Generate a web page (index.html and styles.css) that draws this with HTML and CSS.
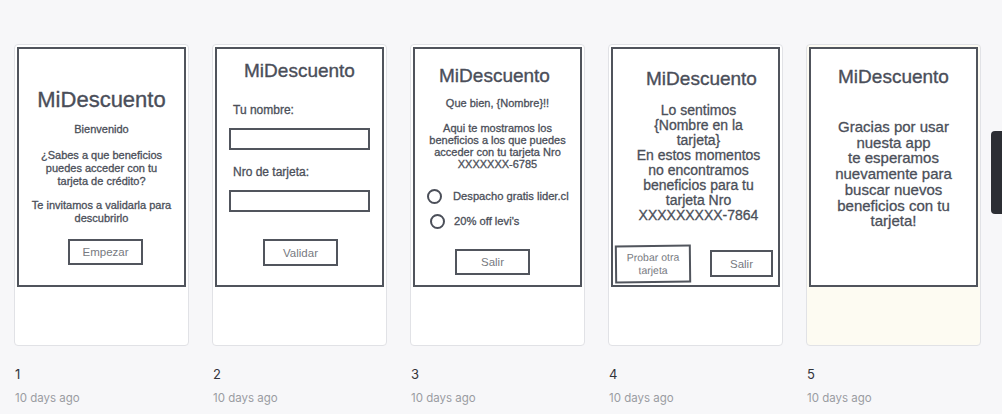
FILE: index.html
```html
<!DOCTYPE html>
<html lang="es">
<head>
<meta charset="utf-8">
<title>MiDescuento</title>
<link rel="stylesheet" href="styles.css">
</head>
<body>
<main class="board">
  <section class="item">
    <div class="card">
      <div class="sketch s1">
        <h2 class="title big">MiDescuento</h2>
        <p class="txt t1a">Bienvenido</p>
        <p class="txt t1b">¿Sabes a que beneficios<br>puedes acceder con tu<br>tarjeta de crédito?</p>
        <p class="txt t1c">Te invitamos a validarla para<br>descubrirlo</p>
        <div class="btn b1">Empezar</div>
      </div>
    </div>
    <div class="num">1</div>
    <div class="date">10 days ago</div>
  </section>

  <section class="item">
    <div class="card">
      <div class="sketch s2">
        <h2 class="title">MiDescuento</h2>
        <p class="lbl l1">Tu nombre:</p>
        <div class="field f1"></div>
        <p class="lbl l2">Nro de tarjeta:</p>
        <div class="field f2"></div>
        <div class="btn b2">Validar</div>
      </div>
    </div>
    <div class="num">2</div>
    <div class="date">10 days ago</div>
  </section>

  <section class="item">
    <div class="card">
      <div class="sketch s3">
        <h2 class="title">MiDescuento</h2>
        <p class="txt t3a">Que bien, {Nombre}!!</p>
        <p class="txt t3b">Aqui te mostramos los<br>beneficios a los que puedes<br>acceder con tu tarjeta Nro<br>XXXXXXX-6785</p>
        <div class="radio r1"><span class="dot"></span><span>Despacho gratis lider.cl</span></div>
        <div class="radio r2"><span class="dot"></span><span>20% off levi's</span></div>
        <div class="btn b3">Salir</div>
      </div>
    </div>
    <div class="num">3</div>
    <div class="date">10 days ago</div>
  </section>

  <section class="item">
    <div class="card">
      <div class="sketch s4">
        <h2 class="title t4h">MiDescuento</h2>
        <p class="txt t4">Lo sentimos<br>{Nombre en la<br>tarjeta}<br>En estos momentos<br>no encontramos<br>beneficios para tu<br>tarjeta Nro<br>XXXXXXXXX-7864</p>
        <div class="btnrow">
          <div class="btn b4a">Probar otra<br>tarjeta</div>
          <div class="btn b4b">Salir</div>
        </div>
      </div>
    </div>
    <div class="num">4</div>
    <div class="date">10 days ago</div>
  </section>

  <section class="item">
    <div class="card cream">
      <div class="sketch s5">
        <h2 class="title">MiDescuento</h2>
        <p class="txt t5">Gracias por usar<br>nuesta app<br>te esperamos<br>nuevamente para<br>buscar nuevos<br>beneficios con tu<br>tarjeta!</p>
      </div>
    </div>
    <div class="num">5</div>
    <div class="date">10 days ago</div>
  </section>
</main>
<div class="sidetab"></div>
</body>
</html>
```

FILE: styles.css
```css
* { box-sizing: border-box; }
html, body { margin: 0; padding: 0; }
body {
  background: #f7f7f9;
  width: 1002px;
  height: 414px;
  overflow: hidden;
  position: relative;
  font-family: "Liberation Sans", Arial, sans-serif;
}
.board {
  display: grid;
  grid-template-columns: repeat(5, 175px);
  column-gap: 23px;
  padding: 44px 0 0 14px;
}
.card {
  height: 302px;
  background: #ffffff;
  border: 1px solid #e1e2e6;
  border-radius: 4px;
  padding: 2px;
}
.card.cream { background: #fdfbf2; }
.sketch {
  height: 240px;
  background: #ffffff;
  border: 2px solid #50545c;
  display: flex;
  flex-direction: column;
  align-items: center;
  text-align: center;
  color: #4b4f59;
}
.title {
  margin: 0;
  font-size: 19px;
  line-height: 22px;
  font-weight: normal;
  color: #4a4e59;
  -webkit-text-stroke: 0.35px #4a4e59;
}
.title.big { font-size: 22px; line-height: 26px; }
.txt, .lbl, .radio {
  -webkit-text-stroke: 0.3px #4b4f59;
}
.txt { margin: 0; font-size: 11px; line-height: 13px; }
.btn {
  border: 2px solid #51555d;
  color: #777a81;
  font-size: 11.5px;
  display: flex;
  align-items: center;
  justify-content: center;
  background: #fff;
}

/* screen 1 */
.s1 { padding-top: 38px; }
.t1a { margin-top: 10px; }
.t1b { margin-top: 13px; }
.t1c { margin-top: 11px; }
.b1 { margin-top: 14px; width: 75px; height: 26px; position: relative; left: 4px; }

/* screen 2 */
.s2 { padding: 11px 12px 0; align-items: stretch; }
.lbl { margin: 0 0 0 4px; font-size: 12px; line-height: 14px; text-align: left; }
.l1 { margin-top: 21px; }
.l2 { margin-top: 15px; }
.field { height: 22px; border: 2px solid #51555d; margin-top: 11px; }
.b2 { margin: 27px auto 0; width: 75px; height: 27px; position: relative; left: 1px; }

/* screen 3 */
.s3 { padding-top: 16px; }
.s3 .title { position: relative; left: -3px; }
.t3a { margin-top: 10px; }
.t3b { margin-top: 12px; line-height: 12px; }
.radio {
  align-self: stretch;
  display: flex;
  align-items: center;
  gap: 11px;
  height: 16px;
  font-size: 11.2px;
  text-align: left;
}
.dot {
  width: 15px;
  height: 15px;
  border: 2px solid #4b4f59;
  border-radius: 50%;
  flex: none;
}
.r1 { margin-top: 18px; padding-left: 12px; }
.r2 { margin-top: 9px; padding-left: 15px; gap: 9px; }
.b3 { margin-top: 20px; width: 75px; height: 26px; position: relative; left: -5px; }

/* screen 4 */
.s4 { padding-top: 19px; }
.t4h { position: relative; left: 6px; }
.t4 { margin-top: 13px; font-size: 14px; line-height: 15px; position: relative; left: 3px; }
.btnrow {
  align-self: stretch;
  display: flex;
  justify-content: space-between;
  align-items: flex-start;
  padding: 0 5px 0 2px;
  margin-top: 22px;
}
.b4a { width: 76px; height: 38px; font-size: 10.5px; line-height: 13px; transform: rotate(-0.6deg); }
.b4b { width: 63px; height: 27px; margin-top: 5px; }

/* screen 5 */
.s5 { padding-top: 17px; }
.t5 { margin-top: 31px; font-size: 15px; line-height: 15.7px; }

/* captions */
.num {
  margin-top: 20px;
  font-family: Inter, "Liberation Sans", sans-serif;
  font-size: 13px;
  line-height: 16px;
  color: #33353b;
  padding-left: 1px;
}
.date {
  margin-top: 9px;
  font-family: Inter, "Liberation Sans", sans-serif;
  font-size: 11.5px;
  line-height: 15px;
  color: #9a9ca2;
  padding-left: 1px;
}

.sidetab {
  position: absolute;
  right: 0;
  top: 131px;
  width: 11px;
  height: 83px;
  background: #2c2e34;
  border-radius: 4px 0 0 4px;
}
```
